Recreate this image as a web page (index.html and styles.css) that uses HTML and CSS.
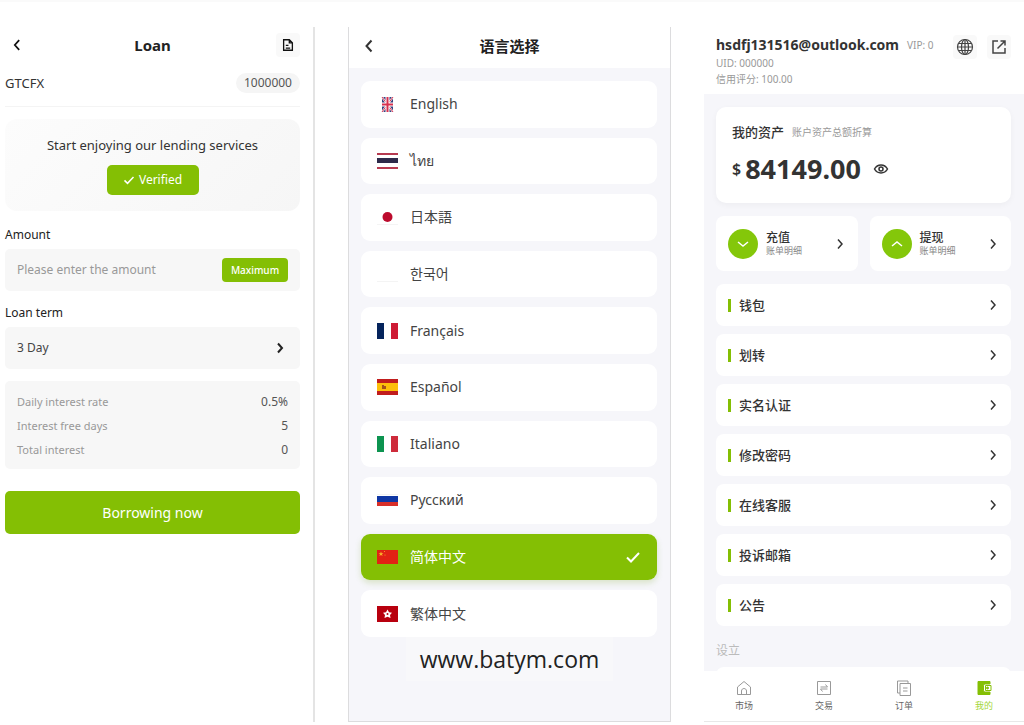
FILE: index.html
```html
<!DOCTYPE html>
<html lang="zh-CN">

<head>
    <meta charset="UTF-8">
    <meta name="viewport" content="width=device-width, initial-scale=1.0">
    <title>GTCFX</title>
    <link rel="stylesheet" href="styles.css">
</head>

<body>
    <!-- Shared icons -->
    <svg class="sprite" aria-hidden="true">
        <symbol id="left" viewBox="0 0 16 16"><path d="M10.5 2.5L5.5 8l5 5.500" /></symbol>
        <symbol id="right" viewBox="0 0 16 16"><path d="M6 3.500L10 8l-4 4.500" /></symbol>
        <symbol id="check" viewBox="0 0 16 16"><path d="M2 8.500l4 4 8-8.500" /></symbol>
    </svg>

    <div class="page">
        <!-- Loan -->
        <section class="panel loan" lang="en">
            <div class="header">
                <button class="icon-btn" aria-label="Back"><svg class="icon bold"><use href="#left" /></svg></button>
                <h1>Loan</h1>
                <button class="icon-btn shaded" aria-label="Records">
                    <svg class="icon" viewBox="0 0 16 16">
                        <path d="M3 2h6.500L13 5.500V14H3zM9.500 2v3.500H13M5.500 8.500h3M5.500 11.500h5" />
                    </svg>
                </button>
            </div>

            <div class="account">
                <span>GTCFX</span>
                <span class="pill">1000000</span>
            </div>

            <div class="promo">
                <div>Start enjoying our lending services</div>
                <button class="verified"><svg class="icon bold"><use href="#check" /></svg>Verified</button>
            </div>

            <label class="field-label" for="amount">Amount</label>
            <div class="field">
                <input type="text" id="amount" placeholder="Please enter the amount">
                <button class="max-btn">Maximum</button>
            </div>

            <label class="field-label" for="term">Loan term</label>
            <div class="field term">
                <select id="term">
                    <option>3 Day</option>
                </select>
                <svg class="icon bold"><use href="#right" /></svg>
            </div>

            <dl class="rates">
                <div><dt>Daily interest rate</dt><dd>0.5%</dd></div>
                <div><dt>Interest free days</dt><dd>5</dd></div>
                <div><dt>Total interest</dt><dd>0</dd></div>
            </dl>

            <button class="borrow-btn">Borrowing now</button>
        </section>

        <!-- Language -->
        <section class="panel language">
            <div class="header">
                <button class="icon-btn" aria-label="返回"><svg class="icon bold"><use href="#left" /></svg></button>
                <h1>语言选择</h1>
                <span></span>
            </div>

            <div class="lang-list">
                <button class="lang">
                    <svg class="flag" viewBox="0 0 21 16">
                        <path fill="#35417e" d="M5 1h11v15H5z" />
                        <path stroke="#fff" stroke-width="2" d="M5 1l11 15M16 1L5 16" />
                        <path stroke="#d8304f" d="M5 1l11 15M16 1L5 16" />
                        <path stroke="#fff" stroke-width="4" d="M10.500 1v15M5 8.500h11" />
                        <path stroke="#d8304f" stroke-width="2" d="M10.500 1v15M5 8.500h11" />
                    </svg>
                    English
                </button>
                <button class="lang">
                    <svg class="flag" viewBox="0 0 21 16">
                        <path fill="#b63a50" d="M0 0h21v2H0zM0 14h21v2H0z" />
                        <path fill="#2d2a4a" d="M0 5h21v5H0z" />
                    </svg>
                    ไทย
                </button>
                <button class="lang" lang="ja">
                    <svg class="flag" viewBox="0 0 21 16">
                        <circle fill="#bc0b2d" cx="10.500" cy="8" r="5" />
                        <path fill="#f4f4f4" d="M0 15h21v1H0z" />
                    </svg>
                    日本語
                </button>
                <button class="lang" lang="ko">
                    <svg class="flag" viewBox="0 0 21 16"><path fill="#f4f4f4" d="M0 15h21v1H0z" /></svg>
                    한국어
                </button>
                <button class="lang">
                    <svg class="flag" viewBox="0 0 21 16">
                        <path fill="#05245c" d="M0 0h7v16H0z" />
                        <path fill="#ce1b35" d="M14 0h7v16h-7z" />
                    </svg>
                    Français
                </button>
                <button class="lang">
                    <svg class="flag" viewBox="0 0 21 16">
                        <path fill="#c11d1d" d="M0 0h21v16H0z" />
                        <path fill="#fcbf0a" d="M0 4h21v8H0z" />
                        <path fill="#a4521c" d="M5 6h2v1h2v3H5z" />
                    </svg>
                    Español
                </button>
                <button class="lang">
                    <svg class="flag" viewBox="0 0 21 16">
                        <path fill="#0d9450" d="M0 0h7v16H0z" />
                        <path fill="#ce2b3b" d="M14 0h7v16h-7z" />
                    </svg>
                    Italiano
                </button>
                <button class="lang">
                    <svg class="flag" viewBox="0 0 21 16">
                        <path fill="#f4f4f4" d="M0 2h21v1H0z" />
                        <path fill="#0f37a4" d="M0 4h21v6H0z" />
                        <path fill="#d82f29" d="M0 10h21v4H0z" />
                    </svg>
                    Русский
                </button>
                <button class="lang active">
                    <svg class="flag" viewBox="0 0 21 16">
                        <path fill="#e22214" d="M0 1h21v14H0z" />
                        <path fill="#fbb52a" d="M4 2.500l.7 1.700h1.800L5 5.300l.6 1.700L4 6l-1.600 1L3 5.300 1.500 4.200h1.800z" />
                        <circle fill="#fbb52a" cx="7.500" cy="2.500" r=".5" />
                        <circle fill="#fbb52a" cx="8" cy="6" r=".5" />
                    </svg>
                    简体中文
                    <svg class="icon bold tick"><use href="#check" /></svg>
                </button>
                <button class="lang">
                    <svg class="flag" viewBox="0 0 21 16">
                        <path fill="#b8000e" d="M0 0h21v16H0z" />
                        <path fill="#fff" d="M10.500 3.500l1.500 2.800 3 .4-2 2.200.5 3.100-3-1.300-3 1.300.5-3.100-2-2.200 3-.4z" />
                        <circle fill="#b8000e" cx="10.500" cy="8" r="1" />
                    </svg>
                    繁体中文
                </button>
            </div>

            <div class="site">www.batym.com</div>
        </section>

        <!-- Profile -->
        <section class="panel profile">
            <div class="user">
                <div class="user-info">
                    <div class="email"><b>hsdfj131516@outlook.com</b><span>VIP: 0</span></div>
                    <div>UID: 000000</div>
                    <div>信用评分: 100.00</div>
                </div>
                <button class="icon-btn shaded" aria-label="语言">
                    <svg class="icon large" viewBox="0 0 18 18">
                        <circle cx="9" cy="9" r="7.500" />
                        <ellipse cx="9" cy="9" rx="3.500" ry="7.500" />
                        <path d="M9 1.500v15M1.500 9h15M2.500 5.500h13M2.500 12.500h13" />
                    </svg>
                </button>
                <button class="icon-btn shaded" aria-label="分享">
                    <svg class="icon" viewBox="0 0 16 16">
                        <path d="M7 2H2v12h12V9M9.500 2H14v4.500M14 2L6.500 9.500" />
                    </svg>
                </button>
            </div>

            <div class="content">
                <div class="assets">
                    <div class="assets-title"><h2>我的资产</h2><span>账户资产总额折算</span></div>
                    <div class="balance">
                        <span class="currency">$</span>
                        <span class="sum">84149.00</span>
                        <button class="eye" aria-label="显示余额">
                            <svg class="icon" viewBox="0 0 16 16">
                                <path d="M1.500 8C4.500 2.700 11.500 2.700 14.500 8 11.500 13.300 4.500 13.300 1.500 8z" />
                                <circle cx="8" cy="8" r="2" />
                            </svg>
                        </button>
                    </div>
                </div>

                <div class="actions">
                    <button class="action">
                        <span class="round"><svg class="icon" viewBox="0 0 16 16"><path d="M3 6l5 4 5-4" /></svg></span>
                        <span class="action-text"><b>充值</b>账单明细</span>
                        <svg class="icon"><use href="#right" /></svg>
                    </button>
                    <button class="action">
                        <span class="round"><svg class="icon" viewBox="0 0 16 16"><path d="M3 10l5-4 5 4" /></svg></span>
                        <span class="action-text"><b>提现</b>账单明细</span>
                        <svg class="icon"><use href="#right" /></svg>
                    </button>
                </div>

                <nav class="menu">
                    <a href="#">钱包<svg class="icon"><use href="#right" /></svg></a>
                    <a href="#">划转<svg class="icon"><use href="#right" /></svg></a>
                    <a href="#">实名认证<svg class="icon"><use href="#right" /></svg></a>
                    <a href="#">修改密码<svg class="icon"><use href="#right" /></svg></a>
                    <a href="#">在线客服<svg class="icon"><use href="#right" /></svg></a>
                    <a href="#">投诉邮箱<svg class="icon"><use href="#right" /></svg></a>
                    <a href="#">公告<svg class="icon"><use href="#right" /></svg></a>
                </nav>

                <h3>设立</h3>
                <div class="settings"></div>
            </div>

            <nav class="tabs">
                <a href="#">
                    <svg class="icon" viewBox="0 0 16 16"><path d="M1.500 7L8 1.500 14.500 7v7.500h-13zM5.500 14.500V11c0-3.300 5-3.300 5 0v3.500" /></svg>
                    市场
                </a>
                <a href="#">
                    <svg class="icon" viewBox="0 0 16 16"><path d="M1.500 1.500h13v13h-13zM4.500 7h7L9.500 4.500M11.500 9h-7l2 2.500" /></svg>
                    交易
                </a>
                <a href="#">
                    <svg class="icon" viewBox="0 0 16 16"><path d="M4 3.500h10.500v12H4zM4 13H1.500V1h10.500v2.500M7 8h4.500M7 11h4.500" /></svg>
                    订单
                </a>
                <a href="#" class="current">
                    <svg class="icon" viewBox="0 0 16 16">
                        <path class="solid" d="M2 1.500h12V4H9.500C8 4 7.500 5 7.500 6v4c0 1 .5 2 2 2H14v2.500H2z" />
                        <path d="M9.500 5.500H15v5H9.500z" />
                        <circle class="solid" cx="11.500" cy="8" r="1" />
                    </svg>
                    我的
                </a>
            </nav>
        </section>
    </div>
</body>

</html>
```
FILE: styles.css
```css
* {
    box-sizing: border-box;
}

body {
    margin: 0;
    font-family: "Noto Sans", "Noto Sans CJK SC", sans-serif;
    font-size: 13px;
    line-height: 20px;
    background-color: #ffffff;
    color: #333;
}

button,
input,
select {
    font: inherit;
    color: inherit;
    border: none;
    background: none;
    padding: 0;
    margin: 0;
}

button {
    cursor: pointer;
}

a {
    color: inherit;
    text-decoration: none;
}

h1,
h2,
h3,
dl,
dd {
    margin: 0;
}

.sprite {
    display: none;
}

.icon {
    width: 16px;
    height: 16px;
    flex-shrink: 0;
    fill: none;
    stroke: currentColor;
    stroke-width: 1.5;
}

.icon.bold {
    stroke-width: 2;
}

.icon.large {
    width: 18px;
    height: 18px;
    stroke-width: 1.2;
}

/* Three screens side by side */
.page {
    display: grid;
    grid-template-columns: 315fr 323fr 320fr;
    grid-template-rows: minmax(0, 1fr);
    gap: 33px;
    height: 100vh;
    min-height: 700px;
    padding: 25px 0 3px;
    border-top: 2px solid #fafafa;
}

.panel {
    display: flex;
    flex-direction: column;
    min-width: 0;
}

.header {
    display: grid;
    grid-template-columns: 24px 1fr 24px;
    align-items: center;
    text-align: center;
}

.header h1 {
    font-size: 15px;
    color: #222;
}

.icon-btn {
    display: flex;
    align-items: center;
    justify-content: center;
    width: 24px;
    height: 24px;
    border-radius: 4px;
}

.shaded {
    background-color: #f9f9f9;
}

/* Loan */
.loan {
    padding: 0 13px 0 5px;
    border-right: 2px solid #e4e4e4;
}

.loan .header {
    height: 36px;
    color: #111;
}

.loan .header .icon {
    width: 14px;
    height: 14px;
}

.account {
    display: flex;
    align-items: center;
    justify-content: space-between;
    height: 44px;
    padding-bottom: 4px;
    border-bottom: 1px solid #f4f4f4;
}

.pill {
    padding: 0 8px;
    border-radius: 10px;
    background-color: #f5f5f5;
    font-size: 12px;
    color: #555;
}

.promo {
    display: flex;
    flex-direction: column;
    align-items: center;
    gap: 10px;
    margin: 12px 0 14px;
    padding: 16px 0;
    border-radius: 12px;
    background: linear-gradient(135deg, #fcfcfc, #f6f6f6);
}

.verified {
    display: flex;
    align-items: center;
    justify-content: center;
    gap: 4px;
    width: 92px;
    height: 30px;
    border-radius: 5px;
    background-color: #84bf04;
    color: #fff;
    font-size: 12px;
}

.verified .icon {
    width: 12px;
    height: 12px;
}

.field-label {
    font-size: 12px;
    color: #222;
}

.field {
    display: flex;
    align-items: center;
    height: 42px;
    margin: 4px 0 12px;
    padding: 0 12px;
    border-radius: 5px;
    background-color: #f7f7f7;
    font-size: 12px;
}

.field input {
    flex: 1;
    min-width: 0;
}

.field input::placeholder {
    color: #999;
    opacity: 1;
}

.max-btn {
    width: 66px;
    height: 24px;
    border-radius: 4px;
    background-color: #84bf04;
    color: #fff;
    font-size: 10px;
    font-weight: 500;
}

/* The arrow shares the cell of the drop-down */
.term {
    display: grid;
    color: #444;
}

.term select,
.term .icon {
    grid-area: 1 / 1;
}

.term select {
    appearance: none;
    width: 100%;
}

.term .icon {
    justify-self: end;
    color: #222;
    pointer-events: none;
}

.rates {
    padding: 9px 12px 7px;
    border-radius: 5px;
    background-color: #f7f7f7;
}

.rates div {
    display: flex;
    justify-content: space-between;
    line-height: 24px;
}

.rates dt {
    font-size: 11px;
    color: #999;
}

.rates dd {
    font-size: 12px;
    color: #555;
}

.borrow-btn {
    height: 43px;
    margin-top: 22px;
    border-radius: 5px;
    background-color: #84bf04;
    color: #fff;
    font-size: 14px;
}

/* Language */
.language {
    border: 1px solid #dcdcde;
    border-top: none;
    background-color: #f6f6fa;
}

.language .header {
    height: 41px;
    padding: 0 8px 4px;
    background-color: #fff;
}

.lang-list {
    display: grid;
    grid-auto-rows: 1fr;
    gap: 10px;
    flex: 1;
    padding: 13px 13px 0 12px;
}

.lang {
    display: flex;
    align-items: center;
    gap: 12px;
    padding: 0 16px;
    border-radius: 9px;
    background-color: #fff;
    font-size: 14px;
    color: #444;
}

.lang.active {
    background-color: #84bf04;
    box-shadow: 0 3px 6px rgba(100, 150, 0, 0.2);
    color: #fff;
}

.flag {
    width: 21px;
    height: 16px;
}

.tick {
    margin-left: auto;
}

.site {
    align-self: center;
    margin-bottom: 40px;
    padding: 0 14px;
    background-color: #f8f8fa;
    font-family: "Open Sans", sans-serif;
    font-size: 23px;
    line-height: 44px;
    color: #222;
}

/* Profile */
.profile {
    border-bottom: 1px solid #e8e8e8;
}

.user {
    display: flex;
    gap: 10px;
    height: 67px;
    padding: 8px 13px 0 12px;
    font-size: 10px;
    line-height: 16px;
    color: #999;
}

.user-info {
    flex: 1;
    white-space: nowrap;
}

.email {
    display: flex;
    align-items: center;
    gap: 8px;
    height: 20px;
}

.email b {
    font-size: 14px;
    color: #333;
}

.user .icon-btn {
    color: #444;
}

.content {
    flex: 1;
    min-height: 0;
    overflow: hidden;
    padding: 13px 13px 0 12px;
    background-color: #f6f6fa;
}

.assets {
    padding: 14px 16px 8px;
    border-radius: 10px;
    background-color: #fff;
    box-shadow: 0 2px 6px rgba(0, 0, 0, 0.04);
}

.assets-title {
    display: flex;
    align-items: center;
    gap: 8px;
    height: 22px;
    font-size: 10px;
    color: #999;
}

.assets-title h2 {
    font-size: 13px;
    font-weight: 500;
    color: #333;
}

.balance {
    display: flex;
    align-items: center;
    gap: 4px;
    height: 52px;
}

.currency {
    font-size: 16px;
    font-weight: 600;
}

.sum {
    font-size: 27px;
    font-weight: 700;
}

.eye {
    display: flex;
    margin-left: 8px;
}

.actions {
    display: grid;
    grid-template-columns: 1fr 1fr;
    gap: 12px;
    margin: 13px 0;
}

.action {
    display: flex;
    align-items: center;
    gap: 8px;
    height: 55px;
    padding: 0 10px 0 12px;
    border-radius: 8px;
    background-color: #fff;
    text-align: left;
}

.round {
    display: flex;
    align-items: center;
    justify-content: center;
    width: 30px;
    height: 30px;
    border-radius: 50%;
    background-color: #84c70a;
    color: #fff;
}

.action-text {
    flex: 1;
    font-size: 9px;
    line-height: 12px;
    color: #888;
}

.action-text b {
    display: block;
    font-size: 12px;
    line-height: 14px;
    font-weight: 500;
    color: #333;
}

.menu {
    display: grid;
    gap: 8px;
}

.menu a {
    display: flex;
    align-items: center;
    height: 42px;
    padding: 0 10px 0 12px;
    border-radius: 8px;
    background-color: #fff;
    font-weight: 500;
}

.menu a::before {
    content: "";
    width: 3px;
    height: 13px;
    margin-right: 8px;
    background-color: #84bf04;
}

.menu .icon {
    margin-left: auto;
}

.content h3 {
    margin: 15px 0 6px;
    font-size: 12px;
    font-weight: 400;
    color: #bbb;
}

.settings {
    height: 42px;
    border-radius: 8px;
    background-color: #fff;
}

.tabs {
    display: grid;
    grid-template-columns: repeat(4, 1fr);
    height: 50px;
    background-color: #fff;
    font-size: 9px;
    line-height: 14px;
    color: #666;
}

.tabs a {
    display: flex;
    flex-direction: column;
    align-items: center;
    justify-content: center;
    gap: 3px;
}

.tabs .icon {
    stroke: #999;
    stroke-width: 1;
}

.tabs .current {
    color: #a4d63a;
}

.tabs .current .icon {
    stroke: #84bf04;
}

.tabs .solid {
    fill: #84bf04;
}
```
